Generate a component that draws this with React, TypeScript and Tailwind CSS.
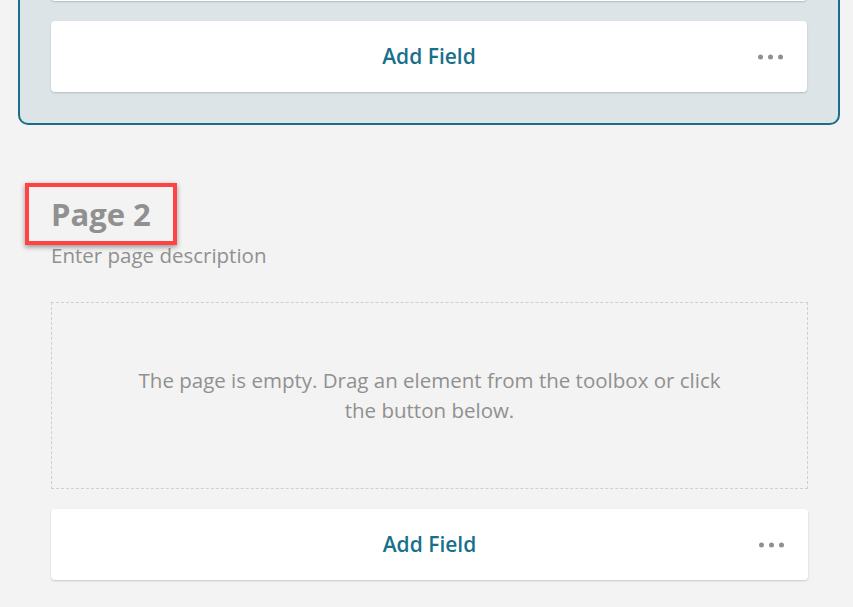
import React from "react";

function AddFieldBar() {
  return (
    <div className="relative flex h-[71px] items-center justify-center rounded-[4px] bg-white shadow-[0_1px_2px_rgba(0,0,0,0.18)]">
      <span className="text-[21px] font-semibold text-[#19708a]">Add Field</span>
      <div className="absolute right-[24px] top-1/2 flex -translate-y-1/2 gap-[5px]">
        <span className="h-[5px] w-[5px] rounded-full bg-[#909090]" />
        <span className="h-[5px] w-[5px] rounded-full bg-[#909090]" />
        <span className="h-[5px] w-[5px] rounded-full bg-[#909090]" />
      </div>
    </div>
  );
}

export default function App() {
  return (
    <div className="h-[607px] w-full overflow-hidden bg-[#f3f3f3]" style={{ fontFamily: '"Open Sans", sans-serif' }}>
      {/* Selected page 1 (continues above the viewport) */}
      <div className="ml-[18px] w-[822px] rounded-b-[10px] border-2 border-t-0 border-[#1b6e87] bg-[#dce4e7] px-[31px] pb-[31px]">
        <div className="-mt-[10px] h-[11px] rounded-b-[4px] bg-white shadow-[0_1px_2px_rgba(0,0,0,0.18)]" />
        <div className="mt-[20px]">
          <AddFieldBar />
        </div>
      </div>

      {/* Page 2 */}
      <div className="ml-[51px] w-[757px] pt-[71px]">
        <div className="relative inline-block">
          <h2 className="text-[31px] font-bold leading-[36px] text-[#909090]">Page 2</h2>
          <div className="absolute -left-[26px] -right-[26px] -top-[13px] -bottom-[13px] border-4 border-[#ff4343] shadow-[0_2px_5px_rgba(0,0,0,0.4)]" />
        </div>
        <p className="mt-[11px] text-[20.5px] leading-[24px] text-[#909090]">Enter page description</p>
        <div className="mt-[35px] flex h-[187px] items-center justify-center border border-dashed border-[#cfcfcf]">
          <p className="-mt-[2px] max-w-[600px] text-center text-[20.5px] leading-[30px] text-[#909090]">
            The page is empty. Drag an element from the toolbox or click the button below.
          </p>
        </div>
        <div className="mt-[20px]">
          <AddFieldBar />
        </div>
      </div>
    </div>
  );
}
